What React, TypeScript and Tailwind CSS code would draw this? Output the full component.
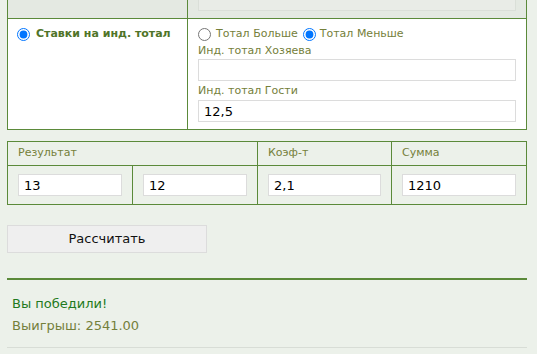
import { useState } from 'react';

const font = { fontFamily: '"DejaVu Sans", Verdana, sans-serif' };

const inputCls =
  'block w-full h-[22px] border border-[#dcdcdc] bg-white px-[5px] text-[13px] leading-[20px] text-black outline-none';

const App = () => {
  const [side, setSide] = useState<'over' | 'under'>('under');
  const [home, setHome] = useState('');
  const [away, setAway] = useState('12,5');
  const [score, setScore] = useState(['13', '12']);
  const [coef, setCoef] = useState('2,1');
  const [sum, setSum] = useState('1210');

  return (
    <div className="min-h-[354px] w-[537px] bg-[#ecf1ea] px-[7px] pr-[10px]" style={font}>
      {/* bet type table */}
      <div className="border-x border-b border-[#5b8a3a] grid grid-cols-[180px_1fr]">
        <div className="h-[19px] bg-[#e4e9e2] border-r border-b border-[#5b8a3a]" />
        <div className="h-[19px] bg-[#e4e9e2] border-b border-[#5b8a3a] px-[10px]">
          <div className="h-[11px] bg-[#e9ece7] border-x border-b border-[#dadfd8]" />
        </div>

        <div className="h-[110px] bg-white border-r border-[#5b8a3a] pl-[4px] pt-[8px]">
          <label className="flex h-[14px] items-center text-[11px] leading-[14px] font-bold text-[#4f7428]">
            <input type="radio" checked readOnly className="m-0 mr-[6px] ml-[5px] h-[13px] w-[13px]" />
            Ставки на инд. тотал
          </label>
        </div>
        <div className="h-[110px] bg-white px-[10px] pt-[8px]">
          <div className="flex h-[14px] items-center text-[11px] leading-[14px] text-[#75803a]">
            <input
              type="radio"
              checked={side === 'over'}
              onChange={() => setSide('over')}
              className="m-0 h-[13px] w-[13px]"
            />
            <span className="ml-[5px] mr-[5px]">Тотал Больше</span>
            <input
              type="radio"
              checked={side === 'under'}
              onChange={() => setSide('under')}
              className="m-0 h-[13px] w-[13px]"
            />
            <span className="ml-[4px]">Тотал Меньше</span>
          </div>
          <div className="mt-[3px] text-[11px] leading-[14px] text-[#75803a]">Инд. тотал Хозяева</div>
          <input className={`${inputCls} mt-[1px]`} value={home} onChange={(e) => setHome(e.target.value)} />
          <div className="mt-[3px] text-[11px] leading-[14px] text-[#75803a]">Инд. тотал Гости</div>
          <input className={`${inputCls} mt-[2px]`} value={away} onChange={(e) => setAway(e.target.value)} />
        </div>
      </div>

      {/* result table */}
      <div className="mt-[11px] border border-[#5b8a3a] grid grid-cols-[125px_125px_134px_1fr]">
        <div className="col-span-2 h-[24px] border-b border-r border-[#5b8a3a] px-[10px] flex items-center text-[11px] text-[#75803a]">
          Результат
        </div>
        <div className="h-[24px] border-b border-r border-[#5b8a3a] px-[10px] flex items-center text-[11px] text-[#75803a]">
          Коэф-т
        </div>
        <div className="h-[24px] border-b border-[#5b8a3a] px-[10px] flex items-center text-[11px] text-[#75803a]">
          Сумма
        </div>

        {score.map((v, i) => (
          <div key={i} className="h-[38px] border-r border-[#5b8a3a] px-[10px] flex items-center">
            <input
              className={inputCls}
              value={v}
              onChange={(e) => setScore(score.map((s, j) => (j === i ? e.target.value : s)))}
            />
          </div>
        ))}
        <div className="h-[38px] border-r border-[#5b8a3a] px-[10px] flex items-center">
          <input className={inputCls} value={coef} onChange={(e) => setCoef(e.target.value)} />
        </div>
        <div className="h-[38px] px-[10px] flex items-center">
          <input className={inputCls} value={sum} onChange={(e) => setSum(e.target.value)} />
        </div>
      </div>

      <button className="mt-[20px] block h-[28px] w-[200px] border border-[#dcdcdc] bg-[#efefef] text-[13px] text-[#111]">
        Рассчитать
      </button>

      <div className="mt-[25px] h-[2px] bg-[#5b8a3a]" />

      <div className="mt-[13px] px-[5px] text-[13px] leading-[22px]">
        <div className="text-[#1f7a20]">Вы победили!</div>
        <div className="text-[#74803b]">Выигрыш: 2541.00</div>
      </div>

      <div className="mt-[10px] h-px bg-[#d8ddd6]" />
    </div>
  );
};

export default App;
